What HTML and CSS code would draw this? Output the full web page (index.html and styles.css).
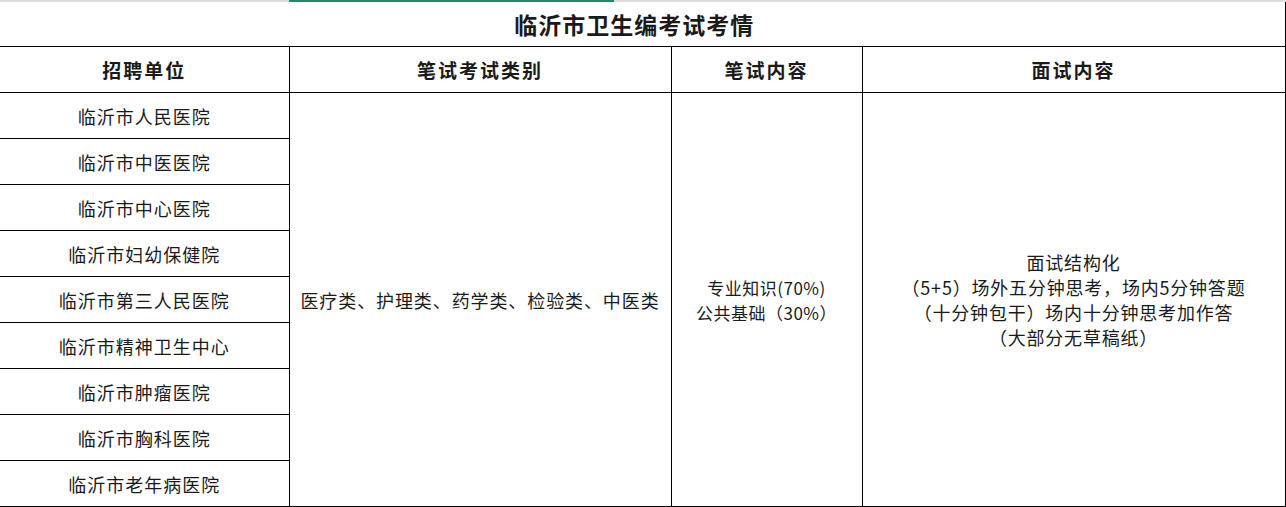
FILE: index.html
```html
<!DOCTYPE html>
<html lang="zh-CN">
<head>
<meta charset="utf-8">
<title>临沂市卫生编考试考情</title>
<link rel="stylesheet" href="styles.css">
</head>
<body>
<div class="topbar"><span class="tb-gray tb-left"></span><span class="tb-green"></span><span class="tb-gray tb-rest"></span></div>
<table class="exam">
  <colgroup>
    <col class="c1"><col class="c2"><col class="c3"><col class="c4">
  </colgroup>
  <tr class="title-row"><td colspan="4" class="title">临沂市卫生编考试考情</td></tr>
  <tr class="head-row">
    <th>招聘单位</th><th>笔试考试类别</th><th>笔试内容</th><th>面试内容</th>
  </tr>
  <tr class="row">
    <td>临沂市人民医院</td>
    <td rowspan="9" class="wide">医疗类、护理类、药学类、检验类、中医类</td>
    <td rowspan="9" class="multi written">专业知识(70%)<br>公共基础（30%）</td>
    <td rowspan="9" class="multi interview">面试结构化<br>（5+5）场外五分钟思考，场内5分钟答题<br>（十分钟包干）场内十分钟思考加作答<br>（大部分无草稿纸）</td>
  </tr>
  <tr class="row"><td>临沂市中医医院</td></tr>
  <tr class="row"><td>临沂市中心医院</td></tr>
  <tr class="row"><td>临沂市妇幼保健院</td></tr>
  <tr class="row"><td>临沂市第三人民医院</td></tr>
  <tr class="row"><td>临沂市精神卫生中心</td></tr>
  <tr class="row"><td>临沂市肿瘤医院</td></tr>
  <tr class="row"><td>临沂市胸科医院</td></tr>
  <tr class="row"><td>临沂市老年病医院</td></tr>
</table>
</body>
</html>
```

FILE: styles.css
```css
html, body {
  margin: 0;
  padding: 0;
  background: #ffffff;
}
body {
  font-family: "Noto Sans CJK SC", "Liberation Serif", sans-serif;
  color: #1a1a1a;
}
.topbar {
  display: flex;
  height: 2px;
  width: 1286px;
}
.tb-gray { background: #dcdcdc; }
.tb-left { width: 289px; }
.tb-green { width: 325px; background: #1f8a68; }
.tb-rest { flex: 1; }

.exam {
  border-collapse: collapse;
  table-layout: fixed;
  width: 1285px;
}
.c1 { width: 289px; }
.c2 { width: 382px; }
.c3 { width: 191px; }
.c4 { width: 423px; }

.exam td, .exam th {
  border: 1px solid #000;
  text-align: center;
  vertical-align: middle;
  padding: 0;
  font-weight: 400;
}
.exam tr > :first-child { border-left: none; }
.exam td.wide, .exam td.multi { border-left: 1px solid #000; }

.title-row td {
  border-top: none;
  height: 44px;
  font-size: 23px;
  font-weight: 700;
  letter-spacing: 1px;
  line-height: 44px;
  padding-right: 16px;
}
.head-row th {
  height: 45px;
  font-size: 19px;
  font-weight: 700;
  letter-spacing: 2px;
}
.row td {
  height: 45px;
  font-size: 18px;
  letter-spacing: 1px;
}
.row td.wide {
  letter-spacing: 0.9px;
}
.row td.multi {
  line-height: 25px;
  font-size: 17px;
  letter-spacing: 0.5px;
}
.row td.interview {
  font-size: 18px;
  letter-spacing: 0.8px;
}
```
